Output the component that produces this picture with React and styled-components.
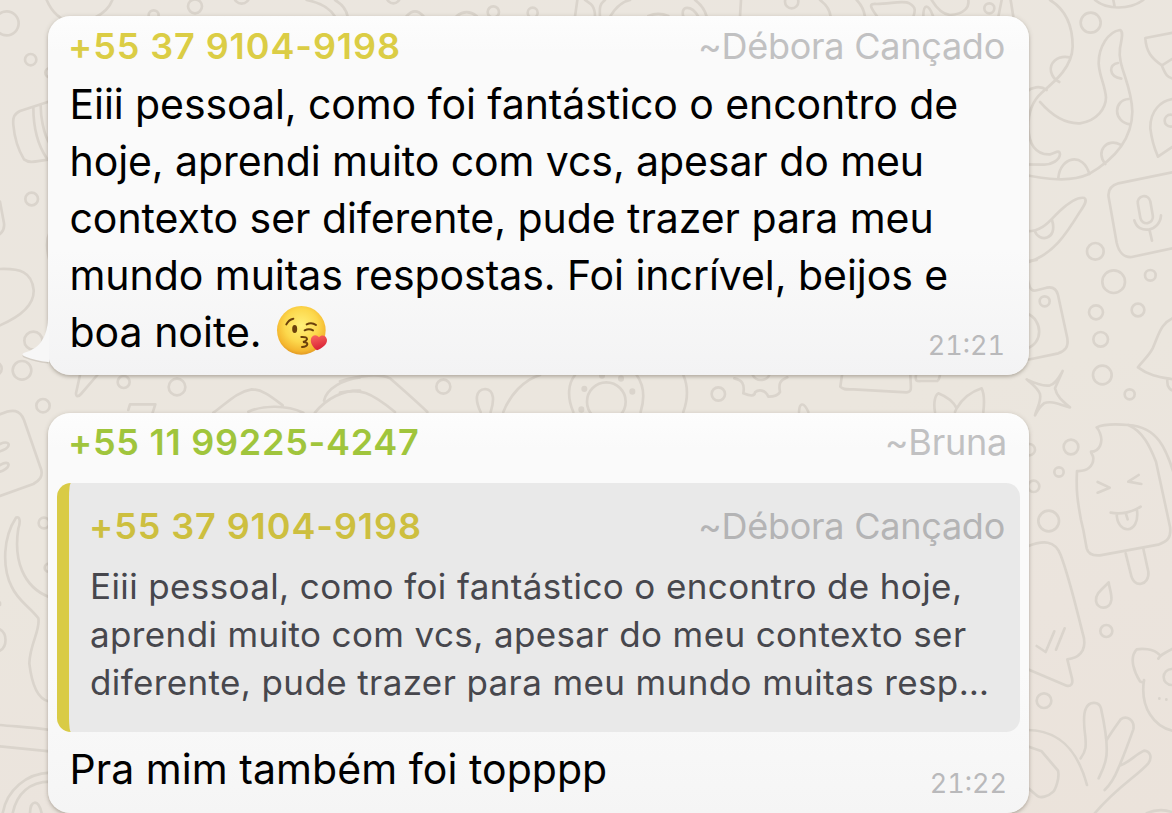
import React from 'react';
import styled, { createGlobalStyle } from 'styled-components';

const Global = createGlobalStyle`
  * { box-sizing: border-box; }
  body { margin: 0; overflow: hidden; font-family: Inter, "Liberation Sans", sans-serif; }
`;

const Chat = styled.main`
  position: relative;
  height: 813px;
  padding: 16px 143px 0 48px;
  overflow: hidden;
  background: linear-gradient(168deg, #ebe6df 0%, #ebe6de 55%, #ebe4dd 78%, #ebe3db 100%);
`;

const Wallpaper = styled.svg`
  position: absolute;
  inset: 0;
  width: 1172px;
  height: 813px;
  fill: none;
  stroke: #dad4cc;
  stroke-width: 8;
  stroke-linejoin: round;
  stroke-linecap: round;
`;

const Thread = styled.div`
  position: relative;
  display: flex;
  flex-direction: column;
  gap: 38px;
`;

const Bubble = styled.article`
  position: relative;
  padding: ${(p) => p.$padding};
  border-radius: 22px;
  background: linear-gradient(#fdfdfd 0, #fafafa 36px, #fafafa 65%, ${(p) => p.$end} 100%);
  box-shadow: 0 1px 5px rgba(70, 60, 45, 0.22), 0 2px 3px rgba(70, 60, 45, 0.18);
`;

const Tail = styled.svg`
  position: absolute;
  left: -27px;
  bottom: 10px;
  width: 28px;
  height: 50px;
  overflow: hidden;
`;

const Header = styled.header`
  display: flex;
  justify-content: space-between;
  height: 44px;
  font-size: 36px;
  line-height: 44px;
  white-space: pre;
`;

const Phone = styled.span`
  font-weight: 600;
  color: ${(p) => p.$color};
  letter-spacing: ${(p) => p.$track}px;
`;

const Nickname = styled.span`
  color: ${(p) => p.$color || '#c1c1c2'};
  letter-spacing: -0.25px;
`;

const Body = styled.div`
  margin-top: ${(p) => p.$gap}px;
  padding-left: 1.5px;
  font-size: 41px;
  line-height: 57px;
  color: #000;
`;

const Line = styled.div`
  white-space: pre;
  letter-spacing: ${(p) => p.$track || 0}px;
`;

const LastRow = styled.div`
  display: flex;
  align-items: center;
  height: 57px;
`;

const Kiss = styled.svg`
  flex: none;
  width: 52px;
  height: 52px;
  margin: 0 0 4px 14px;
`;

const Time = styled.time`
  align-self: flex-end;
  margin: 0 0 ${(p) => p.$drop}px auto;
  font-size: 27px;
  line-height: 33px;
  color: #b9b9bb;
  font-variant-numeric: tabular-nums;
`;

const Quote = styled.blockquote`
  margin: 19px -13px 9px -11px;
  padding: 21px 15px 26px 20px;
  border-left: 12px solid #d9cb46;
  border-radius: 14px;
  background: #e9e9e9;
`;

const QuoteText = styled.div`
  margin-top: 14px;
  padding-left: 1px;
  font-size: 35px;
  line-height: 48px;
  color: #47474d;
`;

function KissEmoji() {
  return (
    <Kiss viewBox="50 45 156 156" aria-label="😘">
      <defs>
        <radialGradient id="face" cx="0.5" cy="0.4" r="0.62">
          <stop offset="0" stopColor="#fff07a" />
          <stop offset="0.55" stopColor="#fcd84c" />
          <stop offset="0.85" stopColor="#f4b62f" />
          <stop offset="1" stopColor="#de9320" />
        </radialGradient>
        <linearGradient id="heart" x1="0" y1="0" x2="0.3" y2="1">
          <stop offset="0" stopColor="#fb6a60" />
          <stop offset="1" stopColor="#d92236" />
        </linearGradient>
      </defs>
      <circle cx="126" cy="121" r="73" fill="url(#face)" />
      <g fill="none" stroke="#6b400b" strokeWidth="6" strokeLinecap="round">
        <path d="M81 103Q88 89 102 86" />
        <path d="M142 103Q157 95 170 105" />
        <path d="M136 121Q149 115 161 121" />
        <path d="M126 141Q144 140 143 148Q141 153 131 156Q145 156 144 163Q142 171 128 171" />
      </g>
      <ellipse cx="106" cy="117" rx="7.500" ry="12" fill="#6b400b" />
      <path
        d="M173 181C161 173 152 158 155 146C158 134 172 132 179 142C187 132 201 137 203 149C204 164 188 174 173 181Z"
        fill="url(#heart)"
      />
    </Kiss>
  );
}

function Doodles() {
  return (
    <Wallpaper viewBox="0 0 1172 813">
      {/* octopus, cap, pin and microphone tile */}
      <g transform="translate(1000 0) scale(.33333)">
        <path d="M150 0C200 30 218 80 218 140C216 200 170 240 125 278C100 300 85 330 85 380C86 430 105 465 150 463C165 460 178 446 180 463C178 480 155 495 130 494L60 493" />
        <path d="M120 306C160 352 200 372 240 370C290 364 318 325 318 292C314 250 298 230 296 190C296 140 325 95 360 90C372 95 364 120 360 145C352 200 395 250 397 335C396 420 340 480 265 523C210 548 140 538 60 522" />
        <path d="M209 172C170 165 148 190 153 215C157 232 165 240 178 246M140 270C120 255 95 262 80 275M354 189C325 192 325 230 364 236M386 297C340 300 338 365 390 373M361 434C320 412 285 455 316 492M175 534C180 470 250 455 268 522" />
        <path d="M285 0C320 30 390 30 430 0M340 0L344 20M32 0L40 50" />
        <circle cx="272" cy="68" r="30" />
        <path d="M530 96L436 114C438 155 455 175 486 196L530 168M486 198C495 220 500 235 530 238" />
        <path d="M530 296C480 298 450 335 451 385C455 420 463 445 474 470L530 432" />
        <circle cx="512" cy="362" r="18" />
        <path d="M530 514L355 550C332 557 323 572 326 592L350 728C356 755 372 773 395 771L530 742" />
        <rect x="417" y="588" width="38" height="82" rx="19" transform="rotate(-10 436 629)" />
        <path d="M403 661C415 705 480 695 483 646M449 692L456 722" />
        <path d="M80 694C130 695 150 660 180 632C210 605 235 590 253 594C264 602 250 620 240 635C200 700 160 765 80 788M104 692C115 728 175 722 156 660" />
        <circle cx="286" cy="754" r="25" />
        <circle cx="341" cy="845" r="34" />
        <circle cx="451" cy="826" r="16" />
      </g>
      {/* camera, sparkle, bell and ice lolly */}
      <g transform="translate(1000 260) scale(.33333)">
        <path d="M84 62C90 90 98 95 110 91L140 83C160 79 170 88 174 105L202 235C206 262 195 272 175 280L80 300M80 160C130 180 130 250 80 266" />
        <path d="M80 4L110 0" />
        <circle cx="134" cy="124" r="15" />
        <circle cx="288" cy="157" r="21" />
        <circle cx="414" cy="150" r="19" />
        <circle cx="302" cy="238" r="22" />
        <circle cx="307" cy="345" r="28" />
        <circle cx="389" cy="403" r="15" />
        <path d="M188 333L165 385C170 410 190 425 210 442C180 435 155 420 132 430C118 440 112 452 105 466C110 445 125 425 120 402C112 382 95 372 80 358C105 370 130 380 150 376C170 370 178 350 188 333Z" />
        <path d="M530 170C480 185 475 230 458 265C445 290 425 305 414 322C450 350 490 352 530 360M502 358C500 380 510 395 530 392" />
        <circle cx="213" cy="561" r="22" />
        <circle cx="177" cy="636" r="14" />
        <circle cx="88" cy="569" r="17" />
        <circle cx="101" cy="679" r="17" />
        <circle cx="146" cy="783" r="31" />
        <path d="M250 810L243 780C232 720 228 690 231 633C260 635 280 620 280 595C280 585 272 580 273 575C300 575 310 545 300 520Q296 508 290 502C315 490 350 492 385 495C430 515 450 560 468 605L510 800C515 835 500 845 475 854L300 886C275 888 264 880 260 865L250 810" />
        <path d="M385 495C470 500 500 560 530 670M293 666L329 683L293 698M416 645L385 665L424 672M332 758C365 765 400 755 422 740M350 760C350 825 420 825 411 751M378 762L383 778" />
        <path d="M377 880L392 940C400 990 450 975 445 935L430 866" />
      </g>
      {/* chat note, drop, piggy bank and hand */}
      <g transform="translate(1000 530) scale(.33333)">
        <path d="M80 50C130 30 165 30 182 75C210 150 225 220 252 325C258 365 235 385 202 388L216 445C220 462 212 470 200 467L80 416" />
        <path d="M110 348L137 366L163 304M168 359L194 295" />
        <path d="M326 157C310 175 285 190 288 213C292 240 330 240 334 210C336 190 328 175 326 157Z" />
        <circle cx="319" cy="303" r="18" />
        <circle cx="132" cy="512" r="22" />
        <path d="M475 386C480 375 500 365 530 350M478 374C460 355 425 355 410 358C385 385 405 430 420 454C430 460 433 455 432 450C420 530 460 595 530 605" />
        <circle cx="515" cy="441" r="24" />
        <path d="M478 505V506M499 508V509" />
        <path d="M80 600C170 600 230 650 261 765M80 648L125 664L174 722C180 745 165 780 160 785C145 800 120 805 112 798L80 770" />
        <path d="M242 685C260 660 258 645 256 620C250 575 250 550 258 535C268 512 298 514 303 535C315 590 325 660 317 690C312 715 300 735 296 745M320 630C335 605 350 585 362 568C380 555 405 570 400 598C385 640 370 680 355 715C345 740 330 765 314 780M362 706C390 695 405 675 432 662C450 664 458 680 445 700C410 740 350 770 280 855M440 850Q485 830 530 852" />
      </g>
      {/* left margin, upper part */}
      <g transform="scale(.33333)">
        <circle cx="20" cy="70" r="36" />
        <circle cx="92" cy="179" r="17" />
        <circle cx="150" cy="218" r="14" />
        <circle cx="95" cy="597" r="19" />
        <path d="M140 0C155 35 180 60 215 66C260 70 320 45 337 0M150 304L60 333C42 342 38 352 40 375C44 420 55 450 72 478C90 492 110 483 150 478M100 322C100 370 110 430 140 475M122 315C122 350 130 400 148 430M0 605L12 670C14 685 8 695 0 702M148 700C138 720 140 750 148 780" />
      </g>
      {/* left margin, between the bubbles */}
      <g transform="translate(0 280) scale(.33333)">
        <path d="M0 -33C60 -35 95 -25 101 30C103 75 60 110 0 136" />
        <circle cx="100" cy="182" r="27" />
        <circle cx="66" cy="271" r="28" />
        <circle cx="-15" cy="266" r="20" />
        <circle cx="129" cy="377" r="20" />
        <circle cx="371" cy="306" r="18" />
        <circle cx="531" cy="321" r="25" />
        <path d="M240 285L228 340C228 352 236 350 243 342L292 285M385 390L390 373H466L458 398M640 398C680 370 710 335 755 328C790 328 820 355 848 376M745 395C790 375 860 375 910 398M945 398C980 355 1030 330 1080 332M972 362C980 325 1030 298 1080 292" />
        <path d="M0 403C40 385 60 390 72 420L124 570C128 590 120 600 100 612L0 648M0 492C30 478 35 500 10 510L0 514M0 555C30 538 35 560 8 572L0 575" />
      </g>
      {/* strip between the bubbles */}
      <g transform="translate(340 340) scale(.33333)">
        <path d="M0 124C60 105 120 100 150 115C190 150 230 185 262 216M0 158C60 145 90 155 165 216M422 216C405 180 405 150 436 147C465 150 462 185 452 216M490 216C510 165 550 120 600 105M700 216C680 170 685 130 705 105M890 105C915 140 913 180 902 216M1030 105C1045 140 1043 180 1030 216" />
        <circle cx="310" cy="140" r="21" />
        <circle cx="799" cy="185" r="58" />
        <circle cx="1135" cy="162" r="20" />
        <path strokeWidth="18" d="M733 146V147M843 115V116M877 154V155M724 208V209M786 106V107" />
      </g>
      <g transform="translate(700 340) scale(.33333)">
        <path d="M103 115C125 120 135 130 130 160C150 168 165 170 165 157C175 148 195 148 205 170C220 170 235 165 240 156C235 130 240 122 262 112M158 105C168 125 198 125 208 105M426 105L421 140C430 150 440 148 460 148L620 157C638 155 632 145 631 105M648 105C645 125 650 124 665 123H712C718 120 718 112 720 105M297 216C298 190 310 182 325 216M705 216C700 190 705 165 715 160C740 170 760 185 770 205C790 170 815 155 845 145C855 165 853 190 850 216M765 216L772 200" />
      </g>
      {/* top strip */}
      <g transform="translate(40 0) scale(.33333)">
        <circle cx="465" cy="19" r="21" />
        <circle cx="341" cy="46" r="15" />
        <circle cx="605" cy="-12" r="23" />
        <circle cx="1060" cy="-10" r="20" />
        <circle cx="1360" cy="36" r="17" />
        <circle cx="1478" cy="38" r="15" />
        <path d="M800 0C840 8 870 25 885 50M885 0C910 15 920 30 923 50M1100 48Q1125 20 1150 48M1250 48Q1280 25 1310 48" />
      </g>
      <g transform="translate(430 0) scale(.33333)">
        <path d="M442 0L435 50M465 0C480 10 495 15 495 50M525 0C510 12 508 20 510 50M540 50C555 25 575 5 600 0M655 48Q685 35 715 48M760 50C750 15 785 15 805 50M795 0C815 15 825 30 830 50" />
      </g>
      <g transform="translate(640 0) scale(.33333)">
        <circle cx="455" cy="5" r="20" />
        <circle cx="1048" cy="25" r="15" />
        <path d="M300 50L303 0M540 0C560 15 570 30 572 50M650 0C665 15 672 30 675 50M712 50C690 20 685 10 710 12C750 12 790 0 808 10C830 22 825 35 820 50M850 50C850 10 865 10 880 50M875 0C890 25 905 42 930 45C975 42 988 20 985 0M1075 50L1085 0" />
      </g>
      {/* left margin, lower part */}
      <g transform="translate(0 470) scale(.33333)">
        <circle cx="132" cy="159" r="16" />
        <circle cx="146" cy="293" r="12" />
        <path d="M48 143C60 138 62 155 55 175C40 270 70 350 145 380M48 143C10 200 5 290 35 350C55 395 90 410 115 445C122 480 90 520 88 580C95 640 110 685 145 694M0 478C22 490 22 530 0 542M0 765C50 770 100 772 150 780M0 829L150 844M8 1030C20 960 80 910 150 908M38 1030C50 970 90 935 150 935M90 1030C90 990 115 985 125 1030M0 398V405" />
      </g>
    </Wallpaper>
  );
}

export default function App() {
  return (
    <>
      <Global />
      <Chat>
        <Doodles />
        <Thread>
          <Bubble $padding="8px 24px 14px 20px" $end="#f3f3f4">
            <Tail viewBox="0 0 28 50">
              <path d="M27 7C26 25 17 35 4 38.500C0.500 39.500 1 42 4 43C11 46 19 47.500 27 48.500Z" fill="rgba(70, 60, 45, 0.14)" />
              <path d="M27 4C26 24 17 34 4 37.500C0.500 38.500 1 40.500 4 41.500C11 44.500 19 46 27 47H28V4Z" fill="#f7f7f7" />
            </Tail>
            <Header>
              <Phone $color="#dbcd45" $track={0.91}>+55 37 9104-9198</Phone>
              <Nickname>~Débora Cançado</Nickname>
            </Header>
            <Body $gap={8}>
              <Line $track={-0.08}>Eiii pessoal, como foi fantástico o encontro de</Line>
              <Line $track={-0.08}>hoje, aprendi muito com vcs, apesar do meu</Line>
              <Line $track={-0.05}>contexto ser diferente, pude trazer para meu</Line>
              <Line $track={-0.05}>mundo muitas respostas. Foi incrível, beijos e</Line>
              <LastRow>
                <Line $track={0}>boa noite.</Line>
                <KissEmoji />
                <Time $drop={-1}>21:21</Time>
              </LastRow>
            </Body>
          </Bubble>
          <Bubble $padding="7px 22px 15px 20px" $end="#f5f5f5">
            <Header>
              <Phone $color="#a0c53c" $track={0.74}>+55 11 99225-4247</Phone>
              <Nickname>~Bruna</Nickname>
            </Header>
            <Quote>
              <Header>
                <Phone $color="#cdbf3f" $track={0.91}>+55 37 9104-9198</Phone>
                <Nickname $color="#b4b4b5">~Débora Cançado</Nickname>
              </Header>
              <QuoteText>
                <Line $track={0.38}>Eiii pessoal, como foi fantástico o encontro de hoje,</Line>
                <Line $track={0.38}>aprendi muito com vcs, apesar do meu contexto ser</Line>
                <Line $track={0.38}>diferente, pude trazer para meu mundo muitas resp…</Line>
              </QuoteText>
            </Quote>
            <Body $gap={0}>
              <LastRow>
                <Line $track={0.05}>Pra mim também foi topppp</Line>
                <Time $drop={-2}>21:22</Time>
              </LastRow>
            </Body>
          </Bubble>
        </Thread>
      </Chat>
    </>
  );
}
